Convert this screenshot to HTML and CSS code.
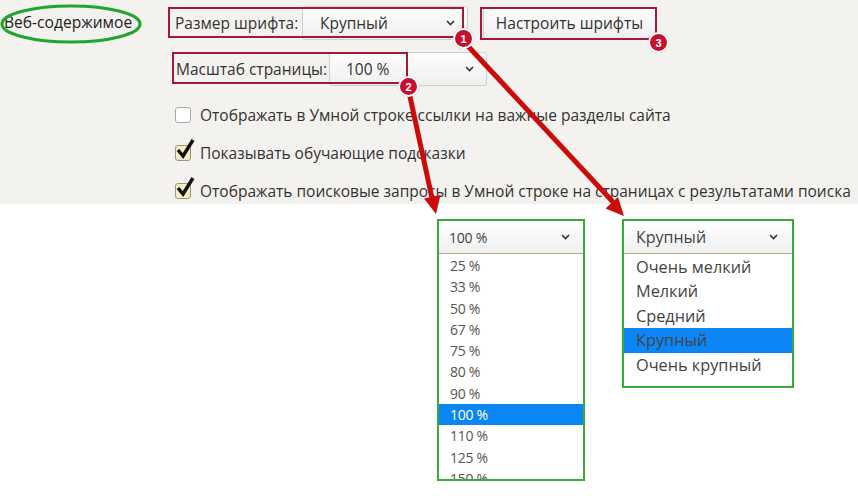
FILE: index.html
```html
<!DOCTYPE html>
<html lang="ru">
<head>
<meta charset="utf-8">
<title>Веб-содержимое</title>
<link rel="stylesheet" href="styles.css">
</head>
<body>
<div class="page">
  <div class="top">
    <div class="section-title">Веб-содержимое</div>
    <div class="settings">
      <div class="row row-font">
        <span class="label label-font">Размер шрифта:</span>
        <div class="select sel-font"><span>Крупный</span><svg class="chev" width="9" height="6" viewBox="0 0 9 6"><path d="M1 1 L4.5 4.5 L8 1" fill="none" stroke="#333" stroke-width="1.6"/></svg></div>
        <div class="btn">Настроить шрифты</div>
      </div>
      <div class="row row-zoom">
        <span class="label label-zoom">Масштаб страницы:</span>
        <div class="select sel-zoom"><span>100 %</span><svg class="chev" width="9" height="6" viewBox="0 0 9 6"><path d="M1 1 L4.5 4.5 L8 1" fill="none" stroke="#333" stroke-width="1.6"/></svg></div>
      </div>
      <div class="checks">
        <div class="check"><span class="box"></span>Отображать в Умной строке ссылки на важные разделы сайта</div>
        <div class="check"><span class="box checked"><svg class="tick" width="20" height="22" viewBox="0 0 20 22"><path d="M3 12 L8 18 L18 2" fill="none" stroke="#111" stroke-width="3.4" stroke-linejoin="miter"/></svg></span>Показывать обучающие подсказки</div>
        <div class="check"><span class="box checked"><svg class="tick" width="20" height="22" viewBox="0 0 20 22"><path d="M3 12 L8 18 L18 2" fill="none" stroke="#111" stroke-width="3.4" stroke-linejoin="miter"/></svg></span>Отображать поисковые запросы в Умной строке на страницах с результатами поиска</div>
      </div>
    </div>
  </div>

  <div class="bottom">
    <div class="dd dd-zoom">
      <div class="dd-head"><span>100 %</span><svg class="chev" width="9" height="6" viewBox="0 0 9 6"><path d="M1 1 L4.5 4.5 L8 1" fill="none" stroke="#333" stroke-width="1.6"/></svg></div>
      <ul class="dd-list">
        <li>25 %</li><li>33 %</li><li>50 %</li><li>67 %</li><li>75 %</li><li>80 %</li><li>90 %</li>
        <li class="sel">100 %</li><li>110 %</li><li>125 %</li><li>150 %</li>
      </ul>
    </div>
    <div class="dd dd-font">
      <div class="dd-head"><span>Крупный</span><svg class="chev" width="9" height="6" viewBox="0 0 9 6"><path d="M1 1 L4.5 4.5 L8 1" fill="none" stroke="#333" stroke-width="1.6"/></svg></div>
      <ul class="dd-list">
        <li>Очень мелкий</li><li>Мелкий</li><li>Средний</li><li class="sel">Крупный</li><li>Очень крупный</li>
      </ul>
    </div>
  </div>

  <div class="mark mark-1"></div>
  <div class="mark mark-2"></div>
  <div class="mark mark-3"></div>

  <svg class="arrows" width="858" height="499" viewBox="0 0 858 499">
    <ellipse cx="71" cy="24" rx="69" ry="18" fill="none" stroke="#22a52a" stroke-width="3.2"/>
    <line x1="466" y1="44" x2="613" y2="202" stroke="#cc0a0a" stroke-width="5"/>
    <polygon points="624,216 605.5,208.5 618,197" fill="#cc0a0a"/>
    <line x1="409" y1="92" x2="432" y2="198" stroke="#cc0a0a" stroke-width="5"/>
    <polygon points="436,214 424,198.5 440.5,195" fill="#cc0a0a"/>
  </svg>

  <div class="badge badge-1">1</div>
  <div class="badge badge-2">2</div>
  <div class="badge badge-3">3</div>
</div>
</body>
</html>
```

FILE: styles.css
```css
* { box-sizing: border-box; }
html, body { margin: 0; padding: 0; background: #ffffff; }
body { font-family: "Open Sans", "Noto Sans", "Liberation Sans", sans-serif; color: #333; }

.page { position: relative; width: 858px; height: 499px; overflow: hidden; background: #fff; }

.top { display: flex; height: 204px; background: #f3f2ef; }

.section-title {
  width: 168px;
  padding: 11px 0 0 4px;
  font-size: 15.6px;
  color: #222;
}

.settings { display: flex; flex-direction: column; }

.row { display: flex; align-items: center; height: 34px; }
.row-font { margin-top: 6px; }
.row-zoom { margin-top: 12px; }

.label { font-size: 15.5px; color: #333; }
.label-font { width: 134px; padding-left: 7px; }
.label-zoom { width: 161px; padding-left: 8px; }

.select {
  display: flex; align-items: center; justify-content: space-between;
  height: 34px;
  border: 1px solid #cfcfcf;
  border-radius: 3px;
  background: linear-gradient(#fdfdfd, #f0f0f0);
  font-size: 15.5px; color: #333;
}
.sel-font { width: 166px; padding: 0 12px 0 17px; }
.sel-zoom { width: 158px; padding: 0 12px 0 16px; }

.btn {
  margin-left: 15px;
  height: 32px; width: 173px;
  display: flex; align-items: center; justify-content: center;
  border: 1px solid #cfcfcf; border-radius: 3px;
  background: linear-gradient(#fdfdfd, #efefef);
  font-size: 15.5px; color: #333;
}

.checks { display: flex; flex-direction: column; margin-top: 10px; }

.check {
  display: flex; align-items: center;
  height: 38px;
  padding-left: 7px;
  font-size: 15.5px; color: #333;
  white-space: nowrap;
}
.box {
  position: relative;
  width: 16px; height: 16px;
  margin-right: 9px;
  border: 1px solid #a9a9a9; border-radius: 3px;
  background: #fff;
  flex: none;
}
.box.checked { background: #f4eec4; border-color: #9a9a7a; }
.tick { position: absolute; left: -1px; top: -8px; }

.bottom {
  display: flex; align-items: flex-start; gap: 37px;
  padding: 15px 0 0 437px;
}

.dd { border: 2px solid #3aaa3a; background: #fff; overflow: hidden; }
.dd-zoom { width: 148px; height: 262px; }
.dd-font { width: 172px; height: 169px; }

.dd-head {
  height: 33px;
  display: flex; align-items: center; justify-content: space-between;
  border-bottom: 1px solid #b9a78c;
  background: linear-gradient(#ffffff, #efefef);
  color: #444;
}
.dd-zoom .dd-head { padding: 0 13px 0 10px; font-size: 14px; letter-spacing: -0.2px; }
.dd-font .dd-head { padding: 0 14px 0 12px; font-size: 16px; }

.dd-list { list-style: none; margin: 0; padding: 0; }
.dd-list li { color: #555; white-space: nowrap; }
.dd-list li.sel { background: #0d86f5; color: #fff; }

.dd-zoom .dd-list { padding-top: 1px; }
.dd-zoom .dd-list li { height: 21.3px; line-height: 21.3px; padding-left: 11px; font-size: 14px; letter-spacing: -0.3px; }

.dd-font .dd-list { padding-top: 1px; }
.dd-font .dd-list li { height: 24.4px; line-height: 24.4px; padding-left: 12px; font-size: 16.3px; color: #444; }

.mark { position: absolute; border: 2px solid #a3193a; }
.mark-1 { left: 168px; top: 7px; width: 296px; height: 31px; }
.mark-2 { left: 172px; top: 52px; width: 236px; height: 32px; }
.mark-3 { left: 480px; top: 7px; width: 177px; height: 33px; }

.arrows { position: absolute; left: 0; top: 0; pointer-events: none; }

.badge {
  position: absolute;
  width: 21px; height: 21px;
  border-radius: 50%;
  background: #c8102e;
  border: 2px solid #fff;
  color: #fff;
  font-family: "Liberation Sans", sans-serif;
  font-weight: bold; font-size: 11px;
  display: flex; align-items: center; justify-content: center;
  box-shadow: 0 0 1px rgba(0,0,0,0.3);
}
.badge-1 { left: 453px; top: 28px; }
.badge-2 { left: 398px; top: 76px; }
.badge-3 { left: 648px; top: 32px; }
```
